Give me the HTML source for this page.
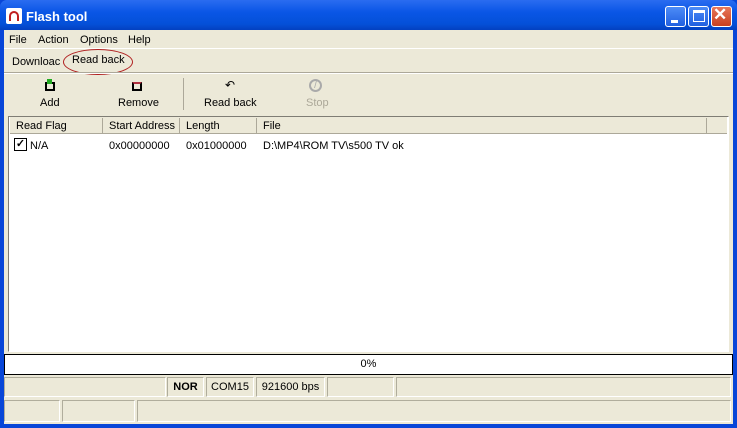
<!DOCTYPE html>
<html><head><meta charset="utf-8"><style>
*{margin:0;padding:0;box-sizing:border-box}
body{width:737px;height:428px;overflow:hidden;background:#0846d8;font-family:"Liberation Sans",sans-serif;font-size:11px;color:#000;position:relative}
.a{position:absolute}
.tb{left:0;top:0;width:737px;height:30px;background:linear-gradient(#2a6cf0,#0a56e6 40%,#0450d8 80%,#0340c0);border-radius:7px 7px 0 0}
.client{left:4px;top:30px;width:729px;height:394px;background:#ece9d8}
.btn{top:6px;width:21px;height:21px;border:1px solid #fff;border-radius:3px;background:linear-gradient(#4d8cf7,#2160e0)}
.st{border:1px solid #b0ad9c;border-right-color:#fff;border-bottom-color:#fff;height:20px;top:377px;font-size:11px;line-height:18px;text-align:center}
</style></head><body>
<div class="a tb"></div>
<div class="a" style="left:6px;top:8px;width:16px;height:16px;background:#fff;border-radius:2px"><div style="margin:3px;width:10px;height:10px;border:2px solid #c02020;border-radius:5px 5px 0 0;border-bottom:none"></div></div>
<div class="a" style="left:26px;top:9px;color:#fff;font-weight:bold;font-size:13px">Flash tool</div>
<div class="a btn" style="left:665px"><div class="a" style="left:5px;top:13px;width:7px;height:3px;background:#fff"></div></div>
<div class="a btn" style="left:688px"><div class="a" style="left:4px;top:3px;width:12px;height:12px;border:1px solid #fff;border-top-width:3px"></div></div>
<div class="a btn" style="left:711px;background:linear-gradient(#e8775a,#c84020)"><div class="a" style="left:1px;top:-2px;color:#fff;font-size:17px;font-weight:bold">✕</div></div>
<div class="a client"></div>
<div class="a" style="left:9px;top:34px">File</div>
<div class="a" style="left:38px;top:34px">Action</div>
<div class="a" style="left:80px;top:34px">Options</div>
<div class="a" style="left:128px;top:34px">Help</div>
<div class="a" style="left:4px;top:48px;width:729px;height:1px;background:#fff"></div>
<div class="a" style="left:12px;top:56px">Downloac</div>
<div class="a" style="left:72px;top:54px">Read back</div>
<div class="a" style="left:63px;top:49px;width:70px;height:26px;border:1px solid #b02020;border-radius:50%"></div>
<div class="a" style="left:4px;top:72px;width:729px;height:1px;background:#aca899"></div>
<div class="a" style="left:4px;top:73px;width:729px;height:1px;background:#fff"></div>
<div class="a" style="left:183px;top:78px;width:1px;height:32px;background:#aca899"></div>
<div class="a" style="left:45px;top:82px;width:10px;height:9px;border:2px solid #000"></div><div class="a" style="left:47px;top:79px;width:5px;height:5px;background:#2a2"></div>
<div class="a" style="left:132px;top:82px;width:10px;height:9px;border:2px solid #000;border-top-color:#b03040"></div>
<div class="a" style="left:225px;top:78px;font-size:12px">↶</div>
<div class="a" style="left:309px;top:79px;width:13px;height:13px;border:2px solid #aaa;border-radius:50%;color:#aaa;font-size:10px;line-height:9px;text-align:center">/</div>
<div class="a" style="left:40px;top:97px">Add</div>
<div class="a" style="left:118px;top:97px">Remove</div>
<div class="a" style="left:204px;top:97px">Read back</div>
<div class="a" style="left:306px;top:97px;color:#aca899">Stop</div>
<div class="a" style="left:8px;top:116px;width:721px;height:236px;background:#fff;border:1px solid #7f7d74;border-right-color:#fff;border-bottom-color:#fff"></div>
<div class="a" style="left:10px;top:117px;width:717px;height:17px;background:#ece9d8;border-bottom:1px solid #aca899"></div>
<div class="a" style="left:102px;top:118px;width:1px;height:15px;background:#aca899"></div>
<div class="a" style="left:179px;top:118px;width:1px;height:15px;background:#aca899"></div>
<div class="a" style="left:256px;top:118px;width:1px;height:15px;background:#aca899"></div>
<div class="a" style="left:706px;top:118px;width:1px;height:15px;background:#aca899"></div>
<div class="a" style="left:16px;top:120px">Read Flag</div>
<div class="a" style="left:109px;top:120px">Start Address</div>
<div class="a" style="left:186px;top:120px">Length</div>
<div class="a" style="left:263px;top:120px">File</div>
<div class="a" style="left:14px;top:138px;width:13px;height:13px;border:1px solid #000;font-size:11px;line-height:11px;text-align:center;font-weight:bold">✓</div>
<div class="a" style="left:30px;top:140px">N/A</div>
<div class="a" style="left:109px;top:140px">0x00000000</div>
<div class="a" style="left:186px;top:140px">0x01000000</div>
<div class="a" style="left:263px;top:140px">D:\MP4\ROM TV\s500 TV ok</div>
<div class="a" style="left:4px;top:354px;width:729px;height:21px;background:#fff;border:1px solid #000;text-align:center;line-height:19px">0%</div>
<div class="a st" style="left:4px;width:162px"></div>
<div class="a st" style="left:167px;width:37px;font-weight:bold">NOR</div>
<div class="a st" style="left:206px;width:48px">COM15</div>
<div class="a st" style="left:256px;width:69px">921600 bps</div>
<div class="a st" style="left:327px;width:67px"></div>
<div class="a st" style="left:396px;width:335px"></div>
<div class="a st" style="left:4px;top:400px;width:56px;height:22px"></div>
<div class="a st" style="left:62px;top:400px;width:73px;height:22px"></div>
<div class="a st" style="left:137px;top:400px;width:594px;height:22px"></div>
</body></html>
